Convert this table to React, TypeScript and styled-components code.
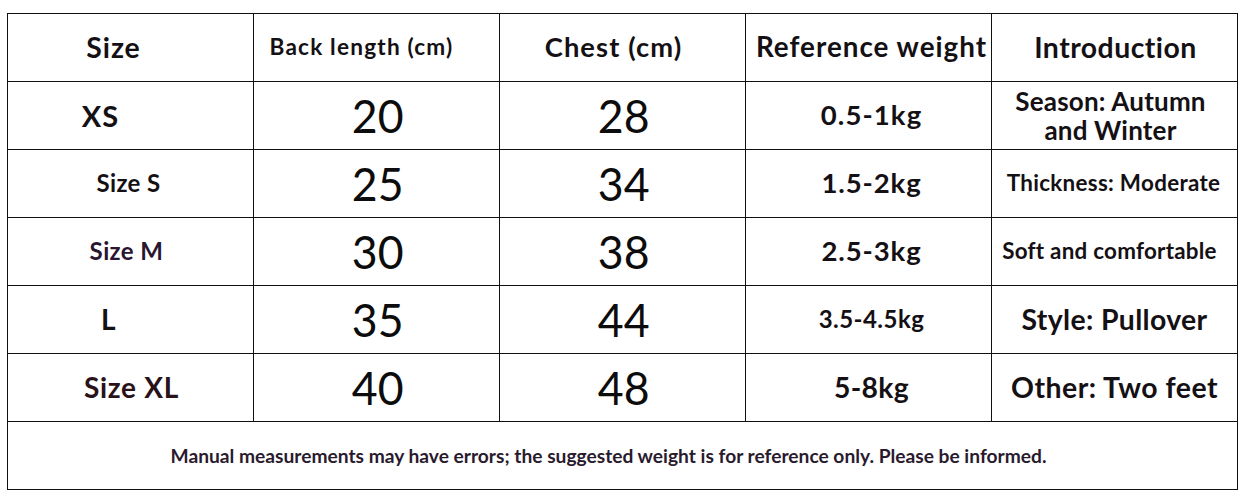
import React from 'react';
import styled, { createGlobalStyle } from 'styled-components';

const GlobalStyle = createGlobalStyle`
  html, body {
    margin: 0;
    padding: 0;
    background: #ffffff;
  }
  body {
    font-family: Lato, "Open Sans", sans-serif;
  }
`;

const Page = styled.div`
  padding: 13px 0 0 7px;
  width: 1244px;
  height: 499px;
  box-sizing: border-box;
`;

const Table = styled.div`
  width: 1231px;
  display: grid;
  grid-template-columns: repeat(5, 1fr);
  grid-template-rows: repeat(7, 67px);
  gap: 1px;
  padding: 1px;
  box-sizing: border-box;
  background: #111111;
`;

const Cell = styled.div`
  background: #ffffff;
  display: flex;
  align-items: center;
  justify-content: center;
  text-align: center;
`;

const FooterCell = styled(Cell)`
  grid-column: 1 / -1;
`;

const Label = styled.span<{ $size: number; $shift?: number; $tone?: string; $track?: number }>`
  display: inline-block;
  font-family: Lato, sans-serif;
  font-weight: 700;
  font-size: ${p => p.$size}px;
  letter-spacing: ${p => p.$track ?? 0.5}px;
  line-height: 1.1;
  color: ${p => p.$tone ?? '#141014'};
  transform: translateX(${p => p.$shift ?? 0}px);
  white-space: nowrap;
`;

const Figure = styled.span<{ $shift?: number }>`
  display: inline-block;
  font-family: Lato, sans-serif;
  font-weight: 400;
  font-size: 46px;
  line-height: 1;
  color: #0c0c0c;
  transform: translateX(${p => p.$shift ?? 0}px) scaleX(0.97);
`;

const Note = styled.span`
  font-family: Lato, sans-serif;
  font-weight: 700;
  font-size: 19.2px;
  color: #2a1a2e;
  transform: translateX(-14px);
  white-space: nowrap;
`;

type Row = {
  size: string;
  sizePx: number;
  sizeShift: number;
  sizeTone?: string;
  sizeTrack?: number;
  back: string;
  chest: string;
  weight: string;
  weightPx: number;
  weightTrack: number;
  intro: string[];
  introPx: number;
  introShift: number;
  introTrack: number;
};

const rows: Row[] = [
  {
    size: 'XS', sizePx: 29, sizeShift: -30, sizeTrack: 1, back: '20', chest: '28',
    weight: '0.5-1kg', weightPx: 27.5, weightTrack: 1.1,
    intro: ['Season: Autumn', 'and Winter'], introPx: 26, introShift: -4, introTrack: 0.2,
  },
  {
    size: 'Size S', sizePx: 24, sizeShift: -2, sizeTrack: 0.4, back: '25', chest: '34',
    weight: '1.5-2kg', weightPx: 27.5, weightTrack: 0.9,
    intro: ['Thickness: Moderate'], introPx: 22.4, introShift: -1, introTrack: 0.3,
  },
  {
    size: 'Size M', sizePx: 24, sizeShift: -4, sizeTone: '#2a1630', sizeTrack: 0.4, back: '30', chest: '38',
    weight: '2.5-3kg', weightPx: 27.5, weightTrack: 0.9,
    intro: ['Soft and comfortable'], introPx: 22.4, introShift: -5, introTrack: 0.25,
  },
  {
    size: 'L', sizePx: 28, sizeShift: -22, back: '35', chest: '44',
    weight: '3.5-4.5kg', weightPx: 24, weightTrack: 0.45,
    intro: ['Style: Pullover'], introPx: 28.4, introShift: 0, introTrack: 0.36,
  },
  {
    size: 'Size XL', sizePx: 28, sizeShift: 1, sizeTone: '#2a1219', sizeTrack: 0.7, back: '40', chest: '48',
    weight: '5-8kg', weightPx: 28.3, weightTrack: 0.3,
    intro: ['Other: Two feet'], introPx: 28.4, introShift: 0, introTrack: 0.5,
  },
];

const App: React.FC = () => {
  return (
    <>
      <GlobalStyle />
      <Page>
        <Table>
          <Cell><Label $size={28.4} $shift={-17} $track={0.9}>Size</Label></Cell>
          <Cell><Label $size={22.6} $shift={-15} $track={1.2}>Back length (cm)</Label></Cell>
          <Cell><Label $size={27.3} $shift={-9} $track={1.1}>Chest (cm)</Label></Cell>
          <Cell><Label $size={27.8} $shift={3} $track={1}>Reference weight</Label></Cell>
          <Cell><Label $size={28.4} $shift={1} $track={0.47}>Introduction</Label></Cell>

          {rows.map(r => (
            <React.Fragment key={r.size}>
              <Cell>
                <Label $size={r.sizePx} $shift={r.sizeShift} $tone={r.sizeTone} $track={r.sizeTrack}>
                  {r.size}
                </Label>
              </Cell>
              <Cell><Figure $shift={1}>{r.back}</Figure></Cell>
              <Cell><Figure $shift={1}>{r.chest}</Figure></Cell>
              <Cell>
                <Label $size={r.weightPx} $shift={3} $track={r.weightTrack}>{r.weight}</Label>
              </Cell>
              <Cell>
                <Label $size={r.introPx} $shift={r.introShift} $track={r.introTrack}>
                  {r.intro.map(line => (
                    <div key={line}>{line}</div>
                  ))}
                </Label>
              </Cell>
            </React.Fragment>
          ))}

          <FooterCell>
            <Note>
              Manual measurements may have errors; the suggested weight is for reference only. Please be informed.
            </Note>
          </FooterCell>
        </Table>
      </Page>
    </>
  );
};

export default App;
